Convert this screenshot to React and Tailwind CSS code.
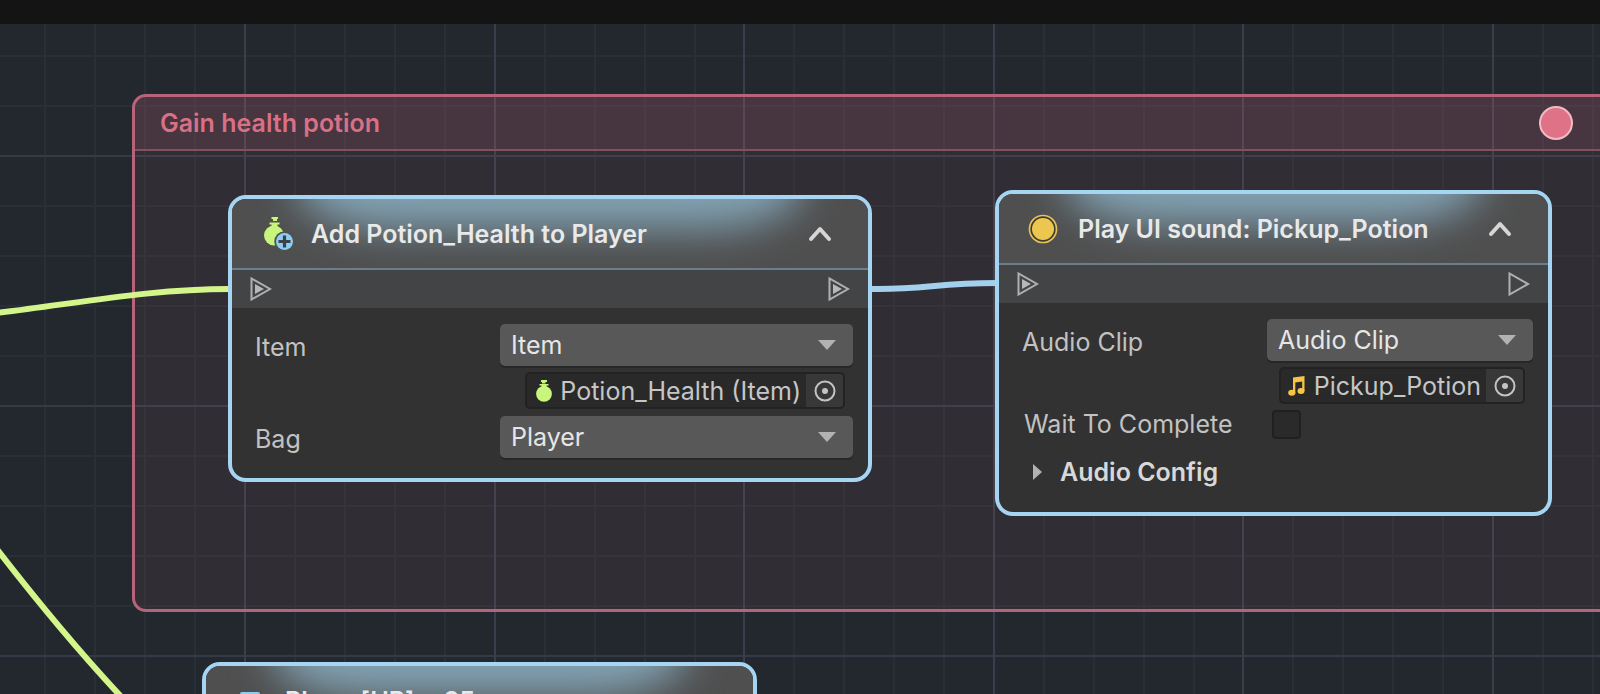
import { useState } from "react";

const MAJOR_X = [-5, 245, 495, 744, 994, 1243, 1493, 1743];
const MAJOR_Y = [-118, 132, 382, 632];
const MINOR_STEPS = [50, 100, 150, 200];

function Grid() {
  return (
    <svg className="absolute inset-0 w-full h-full" aria-hidden="true">
      {MAJOR_Y.flatMap((y) =>
        MINOR_STEPS.map((s) => (
          <rect key={`h${y + s}`} x="0" y={y + s - 1} width="100%" height="2" fill="#292f36" />
        ))
      )}
      {MAJOR_X.flatMap((x) =>
        MINOR_STEPS.map((s) => (
          <rect key={`v${x + s}`} x={x + s - 1} y="0" width="2" height="100%" fill="#292f36" />
        ))
      )}
      {MAJOR_Y.map((y) => (
        <rect key={`H${y}`} x="0" y={y - 1} width="100%" height="2" fill="#343b47" />
      ))}
      {MAJOR_X.map((x) => (
        <rect key={`V${x}`} x={x - 1} y="0" width="2" height="100%" fill="#383e4b" />
      ))}
    </svg>
  );
}

function Wires() {
  return (
    <svg className="absolute inset-0 w-full h-full" fill="none" strokeWidth="6" aria-hidden="true">
      <path d="M-4 289 C80 279 150 265 230 265" stroke="#d3f58a" />
      <path d="M-4 524 C30 568 76 625 128 680" stroke="#d3f58a" />
      <path d="M870 265 C925 266 935 259 997 259" stroke="#a3d0ec" />
    </svg>
  );
}

function Potion({ className }) {
  return (
    <svg viewBox="0 0 16 22" className={className} fill="#c8f57b" aria-hidden="true">
      <path d="M5 0h6v2H9.500v1.500H6V2H5z" />
      <path d="M3.500 4h9v1.500h-2V7h-5V5.500h-2z" />
      <circle cx="8" cy="13.800" r="7.900" />
    </svg>
  );
}

function PotionAddIcon() {
  return (
    <svg width="30" height="34" viewBox="0 0 30 34" aria-hidden="true">
      <g fill="#c8f57b">
        <path d="M7.500 0h6.500v2h-1v2H9V2H7.500z" />
        <path d="M5.500 5.500h10V7.500h-2v2.200h-6V7.500h-2z" />
        <circle cx="10" cy="18.500" r="10" />
      </g>
      <circle cx="20.500" cy="24.500" r="10.200" fill="#4f5152" />
      <circle cx="20.500" cy="24.500" r="8.500" fill="#8ccdf2" />
      <path d="M20.500 18.500v12M14.500 24.500h12" stroke="#3b4146" strokeWidth="3.200" />
    </svg>
  );
}

function CoinIcon() {
  return (
    <svg width="36" height="30" viewBox="0 0 36 30" aria-hidden="true">
      <circle cx="15" cy="15" r="13.500" fill="#3f3c33" stroke="#e6c056" strokeWidth="1.700" />
      <circle cx="15" cy="15" r="11" fill="#ecc750" />
    </svg>
  );
}

function HealthIcon() {
  return (
    <svg width="30" height="30" viewBox="0 0 30 30" fill="#8ccdf2" aria-hidden="true">
      <rect x="2" y="6" width="20" height="20" rx="2" />
    </svg>
  );
}

function NoteIcon() {
  return (
    <svg width="18" height="20" viewBox="0 0 18 20" aria-hidden="true">
      <path d="M5 1.500 16.500 0v15h-2.300V5.500l-6.900 1V17H5z" fill="#f7c544" />
      <ellipse cx="3.800" cy="16.700" rx="3.600" ry="3" fill="#f7c544" />
      <ellipse cx="13" cy="15" rx="3.500" ry="3" fill="#f7c544" />
    </svg>
  );
}

function Port({ connected }) {
  return (
    <svg width="22" height="24" viewBox="0 0 22 24" aria-hidden="true">
      <path d="M1.500 1.500v21L20 12z" fill="none" stroke="#b0b0b0" strokeWidth="2" />
      {connected && <path d="M5 7v10l9-5z" fill="#b8b8b8" />}
    </svg>
  );
}

function Node({ className, icon, title, outConnected, children }) {
  const [open, setOpen] = useState(true);

  return (
    <section
      className={`absolute flex flex-col rounded-[18px] border-4 border-[#a5d5f3] bg-[#323232] overflow-hidden ${className}`}
    >
      {/* HEADER */}
      <header className="relative flex items-center h-[71px] shrink-0 pr-9 bg-[#4f4f4f] border-b-2 border-[#6a7f8b] overflow-hidden">
        <div className="absolute -top-16 left-[64px] right-[64px] h-[94px] rounded-[100px_/_46px] bg-[#82a2b3] blur-[20px]" />
        <span className="relative flex justify-center w-[79px] pl-[15px] shrink-0">{icon}</span>
        <h2 className="relative flex-1 text-[25px] leading-[32px] font-semibold text-[#e9e9e9] whitespace-nowrap">
          {title}
        </h2>
        <button type="button" aria-label="Collapse" onClick={() => setOpen(!open)} className="relative shrink-0">
          <svg width="24" height="16" viewBox="0 0 24 16" fill="none" aria-hidden="true">
            <path
              d="M3 13 12 3l9 10"
              stroke="#d6d6d6"
              strokeWidth="4"
              strokeLinecap="round"
              strokeLinejoin="round"
            />
          </svg>
        </button>
      </header>

      {/* PORTS */}
      <div className="flex items-center justify-between h-[38px] shrink-0 px-[18px] bg-[#434445]">
        <Port connected />
        <Port connected={outConnected} />
      </div>

      {open && children}
    </section>
  );
}

function DropdownRow({ id, label, options, className }) {
  return (
    <div className={`flex items-center pr-[15px] ${className}`}>
      <label htmlFor={id} className="w-[268px] pl-[23px] pt-1 shrink-0 text-[25px] leading-[32px] text-[#c2c2c2]">
        {label}
      </label>
      <div className="relative flex-1">
        <select
          id={id}
          className="block w-full h-[42px] pl-[11px] appearance-none rounded-[5px] bg-[#585858] shadow-[0_2px_0_#272727] text-[25px] leading-[32px] text-[#e6e6e6]"
        >
          {options.map((o) => (
            <option key={o}>{o}</option>
          ))}
        </select>
        <svg
          width="18"
          height="10"
          viewBox="0 0 18 10"
          className="absolute right-[17px] top-4 pointer-events-none"
          aria-hidden="true"
        >
          <path d="M0 0h18L9 10z" fill="#b2b2b2" />
        </svg>
      </div>
    </div>
  );
}

function ObjectField({ icon, name }) {
  return (
    <div className="flex h-[37px] w-fit ml-auto mr-[23px] rounded-[5px] border-2 border-[#222222] bg-[#292929] overflow-hidden">
      <span className="flex items-center justify-center w-[33px] shrink-0">{icon}</span>
      <span className="pr-[5px] text-[25px] leading-[34px] text-[#c6c6c6] whitespace-nowrap">{name}</span>
      <button
        type="button"
        aria-label={`Select ${name}`}
        className="flex items-center justify-center w-[37px] shrink-0 bg-[#383838]"
      >
        <svg width="22" height="22" viewBox="0 0 22 22" aria-hidden="true">
          <circle cx="11" cy="11" r="9.500" fill="none" stroke="#c4c4c4" strokeWidth="2" />
          <circle cx="11" cy="11" r="3" fill="#c4c4c4" />
        </svg>
      </button>
    </div>
  );
}

export default function App() {
  return (
    <div className="flex flex-col h-screen bg-[#141414] font-['Inter',sans-serif]">
      <div className="h-6 shrink-0" />

      <main className="relative flex-1 overflow-hidden bg-[#23282f]">
        <Grid />

        {/* GROUP */}
        <section className="absolute left-[132px] -right-4 top-[70px] h-[518px] rounded-[14px] border-[3px] border-[#b7647a] bg-[#df7085]/8 overflow-hidden">
          <header className="flex items-center justify-between h-[54px] pl-[25px] pr-10 border-b-2 border-[#84505f] bg-[#df7085]/13">
            <h1 className="text-[25px] leading-[32px] font-semibold text-[#d87086]">Gain health potion</h1>
            <button
              type="button"
              aria-label="Group color"
              className="w-[34px] h-[34px] rounded-full border-2 border-[#f0bcc6] bg-[#df7286]"
            />
          </header>
        </section>

        <Wires />

        {/* NODES */}
        <Node
          className="left-[228px] top-[171px] w-[644px]"
          icon={<PotionAddIcon />}
          title="Add Potion_Health to Player"
          outConnected
        >
          <div className="pt-4 pb-5">
            <DropdownRow id="item" label="Item" options={["Item"]} className="mb-[6px]" />
            <ObjectField icon={<Potion className="w-4 h-[22px]" />} name="Potion_Health (Item)" />
            <DropdownRow id="bag" label="Bag" options={["Player"]} className="mt-[7px]" />
          </div>
        </Node>

        <Node
          className="left-[995px] top-[166px] w-[557px]"
          icon={<CoinIcon />}
          title="Play UI sound: Pickup_Potion"
        >
          <div className="pt-4 pb-5">
            <DropdownRow id="clip" label="Audio Clip" options={["Audio Clip"]} className="mb-[6px]" />
            <ObjectField icon={<NoteIcon />} name="Pickup_Potion" />
            <div className="flex items-center h-10">
              <label htmlFor="wait" className="w-[273px] pl-[25px] shrink-0 text-[25px] leading-[32px] text-[#c2c2c2]">
                Wait To Complete
              </label>
              <input
                id="wait"
                type="checkbox"
                className="w-[29px] h-[29px] appearance-none rounded-[4px] border-2 border-[#202020] bg-[#2a2a2a]"
              />
            </div>
            <button type="button" className="flex items-center h-10 mt-2 pl-[34px] gap-[17px]">
              <svg width="10" height="16" viewBox="0 0 10 16" aria-hidden="true">
                <path d="M0 0v16l9-8z" fill="#b2b2b2" />
              </svg>
              <span className="text-[25px] leading-[32px] font-semibold text-[#d8d8d8]">Audio Config</span>
            </button>
          </div>
        </Node>

        <Node className="left-[202px] top-[638px] w-[555px]" icon={<HealthIcon />} title="Player[HP] + 25" />
      </main>
    </div>
  );
}
